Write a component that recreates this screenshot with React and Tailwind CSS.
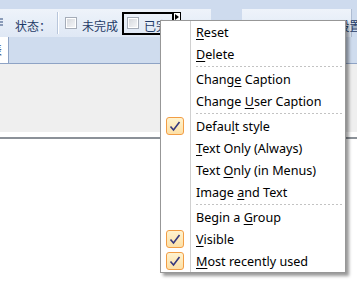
import React from "react";

const items = [
  { t: "Reset", u: 0 },
  { t: "Delete", u: 0 },
  "sep",
  { t: "Change Caption", u: 5 },
  { t: "Change User Caption", u: 7 },
  "sep",
  { t: "Default style", u: 5, c: true },
  { t: "Text Only (Always)", u: 0 },
  { t: "Text Only (in Menus)", u: 5 },
  { t: "Image and Text", u: 6 },
  "sep",
  { t: "Begin a Group", u: 8 },
  { t: "Visible", u: 0, c: true },
  { t: "Most recently used", u: 0, c: true },
];

function Check() {
  return (
    <div className="w-[18px] h-[18px] ml-[5px] rounded-[3px] border border-[#f29d45] bg-gradient-to-b from-[#fff3cf] to-[#fde0a6] flex items-center justify-center">
      <svg width="12" height="11" viewBox="0 0 12 11">
        <path d="M1.5 5.5 L4.5 9 L10.5 1" fill="none" stroke="#36387e" strokeWidth="1.6" />
      </svg>
    </div>
  );
}

function Box() {
  return (
    <div className="w-[12px] h-[12px] border border-[#a5acb8] bg-white p-px">
      <div className="w-full h-full bg-gradient-to-br from-[#d6d9de] to-[#f4f5f7]" />
    </div>
  );
}

export default function App() {
  return (
    <div className="relative w-[357px] h-[284px] overflow-hidden bg-white font-['Noto_Sans','Noto_Sans_CJK_SC',sans-serif]">
      {/* toolbar area */}
      <div className="h-[37px] bg-[#cedbee] pt-[9px] flex">
        <div className="w-[211px] h-[28px] bg-gradient-to-b from-[#eef3fa] to-[#dfe8f5] flex items-start">
          <div className="w-[3px] flex flex-col gap-[1px] mt-[9px]">
            <div className="h-[2px] bg-[#8a9bb8]" />
            <div className="h-[2px] bg-[#8a9bb8]" />
            <div className="h-[2px] bg-[#8a9bb8]" />
          </div>
          <span className="ml-[12px] mt-[11px] text-[12px] text-[#1f3a66] font-['Noto_Sans_CJK_SC',sans-serif] leading-none">状态：</span>
          <div className="w-px h-[22px] bg-[#b8c6db] ml-[6px] mt-[3px] border-r border-white box-content" />
          <div className="ml-[6px] mt-[8px]"><Box /></div>
          <span className="ml-[5px] mt-[11px] text-[12px] text-[#1f3a66] font-['Noto_Sans_CJK_SC',sans-serif] leading-none">未完成</span>
          <div className="relative ml-[4px] w-[52px] h-[23px] border-2 border-black flex items-start mt-[3px]">
            <div className="ml-[3px] mt-[3px]"><Box /></div>
            <span className="ml-[5px] mt-[6px] text-[12px] text-[#1f3a66] font-['Noto_Sans_CJK_SC',sans-serif] leading-none whitespace-nowrap">已完成</span>
            <div className="absolute -right-[9px] -top-[2px] w-[8px] h-[9px] bg-white border border-black flex items-center justify-center">
              <svg width="4" height="6" viewBox="0 0 4 6"><path d="M0 0 L4 3 L0 6 Z" fill="#000" /></svg>
            </div>
          </div>
        </div>
        <div className="w-[31px]" />
        <div className="w-[110px] h-[28px] bg-gradient-to-b from-[#eef3fa] to-[#dfe8f5] flex items-start border-r border-[#aebcd2]">
          <div className="w-[2px] h-[2px] bg-[#8a9bb8] ml-[3px] mt-[8px]" />
          <span className="ml-[15px] mt-[11px] text-[12px] text-[#1f3a66] font-['Noto_Sans_CJK_SC',sans-serif] leading-none whitespace-nowrap">导出 全部数据 设置</span>
        </div>
      </div>

      {/* tab row */}
      <div className="h-[27px] bg-[#cfdcee] border-b border-[#8ea3c5] flex">
        <div className="w-[9px] h-full bg-white border-r border-[#8ea3c5] overflow-hidden flex justify-end items-center">
          <span className="mr-[6px] text-[12px] text-[#1f3a66] font-['Noto_Sans_CJK_SC',sans-serif] leading-none whitespace-nowrap">表</span>
        </div>
      </div>
      <div className="h-[68px] bg-[#efefef]" />
      <div className="h-[5px] bg-white" />
      <div className="h-[2px] bg-[#8b9198]" />

      {/* popup menu */}
      <div className="absolute left-[160px] top-[20px] w-[186px] border border-[#979797] bg-white shadow-[3px_3px_3px_rgba(0,0,0,0.4)] flex flex-col text-[12.6px] text-black">
        {items.map((it, i) =>
          it === "sep" ? (
            <div key={i} className="h-[3px] flex">
              <div className="w-[30px] border-r border-[#d0d0d0]" />
              <div className="ml-[5px] mr-[3px] mt-px h-px flex-1 bg-[linear-gradient(to_right,#c3c3c3_50%,transparent_50%)] bg-[length:4px_1px]" />
            </div>
          ) : (
            <div key={i} className="h-[22px] flex items-center">
              <div className="w-[30px] h-full border-r border-[#d0d0d0] flex items-center">
                {it.c && <Check />}
              </div>
              <span className="ml-[5px] mt-[2px] leading-none whitespace-nowrap">
                {it.t.slice(0, it.u)}
                <span className="underline underline-offset-[2px]">{it.t[it.u]}</span>
                {it.t.slice(it.u + 1)}
              </span>
            </div>
          )
        )}
      </div>
    </div>
  );
}
